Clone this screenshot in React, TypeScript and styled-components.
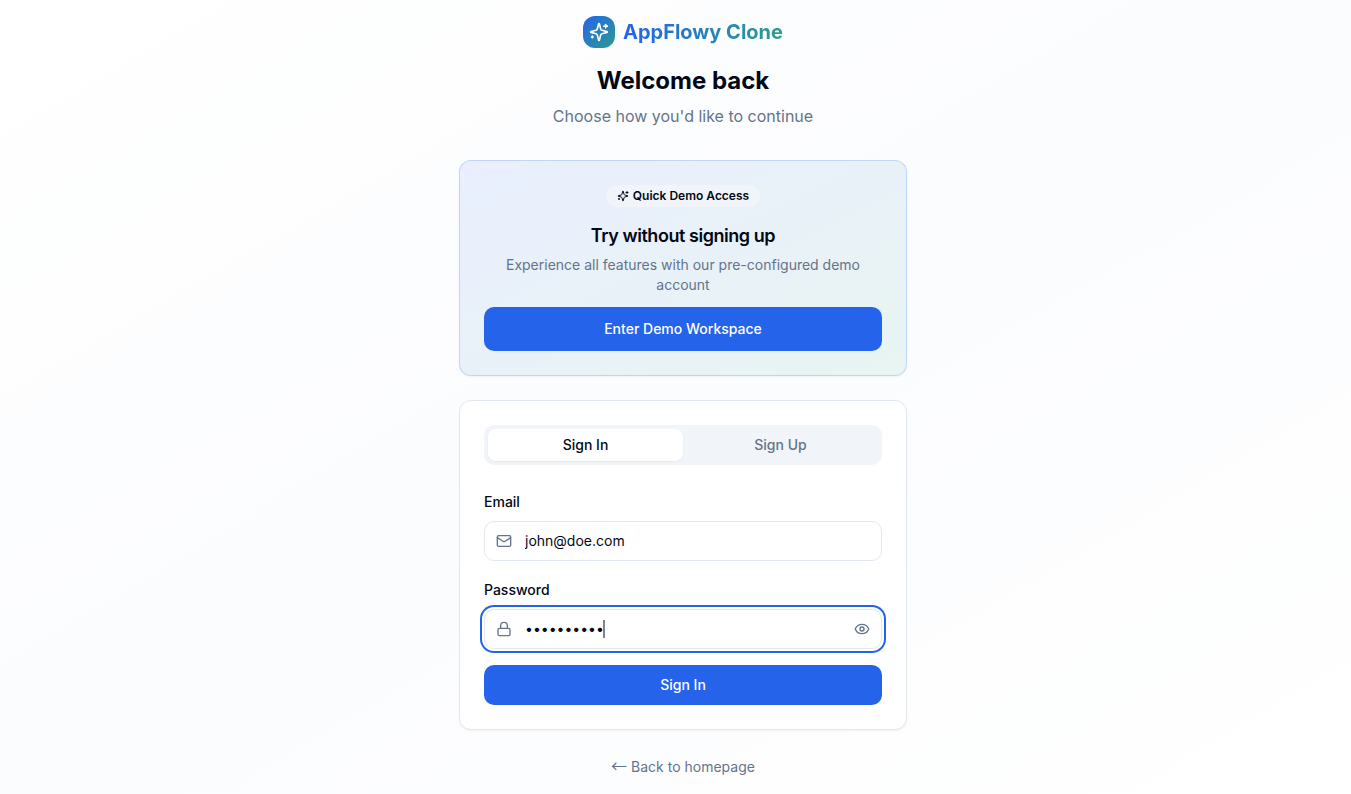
import React, { useState } from "react";
import styled, { createGlobalStyle, css } from "styled-components";
import { Mail, Lock, Eye, EyeOff } from "lucide-react";

const color = {
  background: "#ffffff",
  foreground: "#020817",
  muted: "#f1f5f9",
  mutedForeground: "#64748b",
  border: "#e2e8f0",
  primary: "#2563eb",
  accent: "#2a9d8f",
};

const GlobalStyle = createGlobalStyle`
  *, *::before, *::after { box-sizing: border-box; }
  body {
    margin: 0;
    font-family: Inter, "Liberation Sans", sans-serif;
    font-size: 16px;
    line-height: 24px;
    color: ${color.foreground};
    -webkit-font-smoothing: antialiased;
  }
  h1, h2, p { margin: 0; }
  button, input { font: inherit; color: inherit; }
`;

const Page = styled.main`
  min-height: 100vh;
  display: flex;
  align-items: center;
  justify-content: center;
  padding: 16px 16px 16px 31px;
  background: linear-gradient(to bottom right, #ffffff, #fbfcfe, #ffffff);
`;

const Column = styled.div`
  width: 100%;
  max-width: 448px;
`;

const Header = styled.header`
  display: flex;
  flex-direction: column;
  align-items: center;
  text-align: center;
  margin-bottom: 32px;
`;

const Brand = styled.div`
  display: flex;
  align-items: center;
  gap: 8px;
  margin-bottom: 16px;
`;

const BrandMark = styled.span`
  width: 32px;
  height: 32px;
  display: flex;
  align-items: center;
  justify-content: center;
  border-radius: 12px;
  color: #ffffff;
  background: linear-gradient(to bottom right, ${color.primary}, ${color.accent});
`;

const BrandName = styled.span`
  font-size: 20px;
  line-height: 28px;
  font-weight: 700;
  color: transparent;
  background: linear-gradient(to right, ${color.primary}, ${color.accent});
  background-clip: text;
  -webkit-background-clip: text;
`;

const Heading = styled.h1`
  font-size: 24px;
  line-height: 34px;
  font-weight: 700;
  margin-bottom: 6px;
`;

const Subheading = styled.p`
  color: ${color.mutedForeground};
`;

const Card = styled.section<{ $tinted?: boolean }>`
  padding: 24px;
  border: 1px solid ${color.border};
  border-radius: 12px;
  background: ${color.background};
  box-shadow: 0 1px 2px rgba(0, 0, 0, 0.05);
  ${(p) =>
    p.$tinted &&
    css`
      margin-bottom: 24px;
      border-color: rgba(37, 99, 235, 0.2);
      background: linear-gradient(to bottom right, #e9effe, #e9f1f8 50%, #e8f5f2);
    `}
`;

const DemoIntro = styled.div`
  display: flex;
  flex-direction: column;
  align-items: center;
  text-align: center;
  margin-bottom: 12px;
`;

const Badge = styled.span`
  display: flex;
  align-items: center;
  gap: 4px;
  padding: 3px 11px;
  margin-bottom: 14px;
  border-radius: 11px;
  font-size: 12px;
  line-height: 16px;
  font-weight: 600;
  background: ${color.muted};
`;

const CardTitle = styled.h2`
  font-size: 18px;
  line-height: 30px;
  font-weight: 600;
  letter-spacing: -0.025em;
  margin-bottom: 4px;
`;

const CardText = styled.p`
  font-size: 14px;
  line-height: 20px;
  color: ${color.mutedForeground};
`;

const Button = styled.button<{ $tall?: boolean }>`
  width: 100%;
  height: ${(p) => (p.$tall ? 44 : 40)}px;
  border: 0;
  border-radius: 10px;
  font-size: 14px;
  line-height: 20px;
  font-weight: 500;
  color: #ffffff;
  background: ${color.primary};
  cursor: pointer;
`;

const Tabs = styled.div`
  display: grid;
  grid-template-columns: 1fr 1fr;
  height: 40px;
  padding: 4px;
  margin-bottom: 24px;
  border-radius: 10px;
  background: ${color.muted};
`;

const Tab = styled.button<{ $active: boolean }>`
  border: 0;
  border-radius: 8px;
  font-size: 14px;
  line-height: 20px;
  font-weight: 500;
  cursor: pointer;
  color: ${(p) => (p.$active ? color.foreground : color.mutedForeground)};
  background: ${(p) => (p.$active ? color.background : "transparent")};
  box-shadow: ${(p) => (p.$active ? "0 1px 2px rgba(0, 0, 0, 0.05)" : "none")};
`;

const Form = styled.form`
  display: flex;
  flex-direction: column;
  gap: 16px;
`;

const Field = styled.div`
  display: flex;
  flex-direction: column;
  gap: 6px;
`;

const Label = styled.label`
  font-size: 14px;
  line-height: 26px;
  font-weight: 500;
`;

const InputBox = styled.div`
  display: flex;
  align-items: center;
  gap: 13px;
  height: 40px;
  padding: 0 11px;
  border: 1px solid ${color.border};
  border-radius: 10px;
  color: ${color.mutedForeground};
  background: ${color.background};
  &:has(input:focus) {
    box-shadow: 0 0 0 2px ${color.background}, 0 0 0 4px ${color.primary};
  }
`;

const InputArea = styled.div`
  position: relative;
  display: flex;
  flex: 1;
  min-width: 0;
`;

const Input = styled.input`
  flex: 1;
  min-width: 0;
  padding: 0;
  border: 0;
  outline: 0;
  font-size: 14px;
  line-height: 20px;
  color: ${color.foreground};
  background: transparent;
  &[type="password"] {
    caret-color: transparent;
  }
`;

const Caret = styled.span`
  position: absolute;
  top: 1px;
  bottom: 1px;
  width: 2px;
  background: #80838b;
  pointer-events: none;
  visibility: hidden;
  input[type="password"]:focus + & {
    visibility: visible;
  }
`;

const IconButton = styled.button`
  display: flex;
  padding: 0;
  border: 0;
  background: transparent;
  color: inherit;
  cursor: pointer;
`;

const Footer = styled.footer`
  margin-top: 26px;
  text-align: center;
  font-size: 14px;
  line-height: 22px;
`;

const BackLink = styled.a`
  color: ${color.mutedForeground};
  text-decoration: none;
`;

const Arrow = styled.span`
  font-family: "Noto Sans CJK SC", sans-serif;
  font-size: 16px;
  line-height: 16px;
`;

const BULLET_WIDTH = 8;

function SparklesIcon({ size }: { size: number }) {
  return (
    <svg
      width={size}
      height={size}
      viewBox="0 0 24 24"
      fill="none"
      stroke="currentColor"
      strokeWidth="2"
      strokeLinecap="round"
      strokeLinejoin="round"
      aria-hidden="true"
    >
      <path d="M9.937 15.5A2 2 0 0 0 8.5 14.063l-6.135-1.582a.5.5 0 0 1 0-.962L8.5 9.936A2 2 0 0 0 9.937 8.5l1.582-6.135a.5.5 0 0 1 .963 0L14.063 8.5A2 2 0 0 0 15.5 9.937l6.135 1.581a.5.5 0 0 1 0 .964L15.5 14.063a2 2 0 0 0-1.437 1.437l-1.582 6.135a.5.5 0 0 1-.963 0z" />
      <path d="M20 3v4" />
      <path d="M22 5h-4" />
      <path d="M4 17v2" />
      <path d="M5 18H3" />
    </svg>
  );
}

export default function App() {
  const [mode, setMode] = useState("Sign In");
  const [email, setEmail] = useState("john@doe.com");
  const [password, setPassword] = useState("johndoe123");
  const [visible, setVisible] = useState(false);

  return (
    <>
      <GlobalStyle />
      <Page>
        <Column>
          <Header>
            <Brand>
              <BrandMark>
                <SparklesIcon size={20} />
              </BrandMark>
              <BrandName>AppFlowy Clone</BrandName>
            </Brand>
            <Heading>Welcome back</Heading>
            <Subheading>Choose how you'd like to continue</Subheading>
          </Header>

          <Card $tinted>
            <DemoIntro>
              <Badge>
                <SparklesIcon size={12} />
                Quick Demo Access
              </Badge>
              <CardTitle>Try without signing up</CardTitle>
              <CardText>Experience all features with our pre-configured demo account</CardText>
            </DemoIntro>
            <Button type="button" $tall>
              Enter Demo Workspace
            </Button>
          </Card>

          <Card>
            <Tabs role="tablist">
              {["Sign In", "Sign Up"].map((name) => (
                <Tab
                  key={name}
                  type="button"
                  role="tab"
                  aria-selected={mode === name}
                  $active={mode === name}
                  onClick={() => setMode(name)}
                >
                  {name}
                </Tab>
              ))}
            </Tabs>
            <Form onSubmit={(e) => e.preventDefault()}>
              <Field>
                <Label htmlFor="email">Email</Label>
                <InputBox>
                  <Mail size={16} />
                  <InputArea>
                    <Input id="email" type="email" value={email} onChange={(e) => setEmail(e.target.value)} />
                  </InputArea>
                </InputBox>
              </Field>
              <Field>
                <Label htmlFor="password">Password</Label>
                <InputBox>
                  <Lock size={16} />
                  <InputArea>
                    <Input
                      id="password"
                      type={visible ? "text" : "password"}
                      autoFocus
                      value={password}
                      onChange={(e) => setPassword(e.target.value)}
                    />
                    <Caret style={{ left: Math.max(0, password.length * BULLET_WIDTH - 2) }} />
                  </InputArea>
                  <IconButton
                    type="button"
                    aria-label={visible ? "Hide password" : "Show password"}
                    onClick={() => setVisible(!visible)}
                  >
                    {visible ? <EyeOff size={16} /> : <Eye size={16} />}
                  </IconButton>
                </InputBox>
              </Field>
              <Button type="submit">{mode}</Button>
            </Form>
          </Card>

          <Footer>
            <BackLink href="#">
              <Arrow>←</Arrow> Back to homepage
            </BackLink>
          </Footer>
        </Column>
      </Page>
    </>
  );
}
